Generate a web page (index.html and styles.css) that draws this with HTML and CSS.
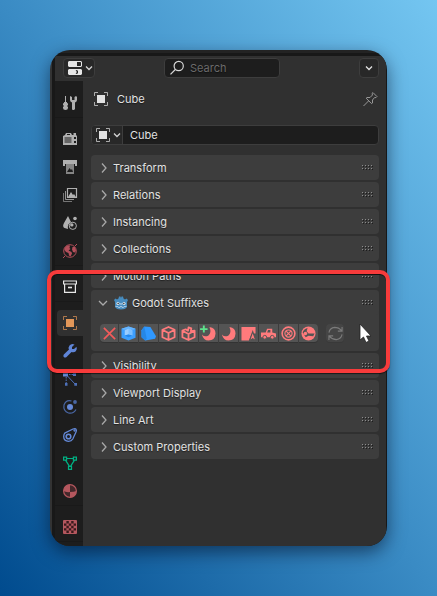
FILE: index.html
```html
<!DOCTYPE html>
<html lang="en">
<head>
<meta charset="utf-8">
<title>Object Properties</title>
<link rel="stylesheet" href="styles.css">
</head>
<body>
<svg class="defs" aria-hidden="true">
  <symbol id="right" viewBox="0 0 8 12"><path d="M2 1.5 6 6 2 10.5" fill="none" stroke="currentColor" stroke-width="1.3"/></symbol>
  <symbol id="down" viewBox="0 0 8 6"><path d="M1 1.5 4 4.5 7 1.5" fill="none" stroke="currentColor" stroke-width="1.3"/></symbol>
  <symbol id="object" viewBox="0 0 14 14"><path d="M.5 4V.5H4M10 .5h3.500V4M13.500 10v3.500H10M4 13.500H.5V10" fill="none" stroke="currentColor" opacity=".7"/><path d="M3 3h8v8H3z" fill="currentColor"/></symbol>
  <symbol id="grip" viewBox="0 0 12 6"><path d="M0 1h1v1H0zM3 1h1v1H3zM6 1h1v1H6zM9 1h1v1H9zM0 4h1v1H0zM3 4h1v1H3zM6 4h1v1H6zM9 4h1v1H9z" fill="#8c8c8c"/><path d="M1 2h1v1H1zM4 2h1v1H4zM7 2h1v1H7zM10 2h1v1h-1zM1 5h1v1H1zM4 5h1v1H4zM7 5h1v1H7zM10 5h1v1h-1z" fill="#1c1c1c"/></symbol>
</svg>
<main class="window">
  <header class="header">
    <div class="editor-type">
      <svg width="14" height="14" viewBox="0 0 14 14"><path d="M1 0h12l1 1v4l-1 1H1L0 5V1zM9 1v4h3.500l.5-.5v-3l-.5-.5zM1 8h12l1 1v4l-1 1H1l-1-1V9zM7.500 9l1 1v2l-1 1H9l1-1v-2L9 9z" fill="#e6e6e6" fill-rule="evenodd"/></svg>
      <svg class="chev" width="8" height="6"><use href="#down"/></svg>
    </div>
    <div class="search">
      <svg width="16" height="16" viewBox="0 0 16 16" fill="none" stroke="#d8d8d8" stroke-width="1.200"><circle cx="9.700" cy="6" r="4.600"/><path d="M6.300 9.500 1.500 14.300"/></svg>
      <span>Search</span>
    </div>
    <div class="options"><svg width="8" height="6"><use href="#down"/></svg></div>
  </header>
  <div class="content">
    <nav class="tabs">
      <div class="group">
        <div class="tab"><svg width="14" height="14" viewBox="0 0 14 14" fill="#b0b0b0"><path d="M2 0h1v6H2zM0 8q0-1 1-1V6h3v1q1 0 1 1v1L4 10l1 1v1q0 2-2.500 2T0 12v-1l1-1-1-1z"/><path d="M7 0l2 1v3h2.500V1L13 0l1 1v3q0 1.500-2 2.500V13l-1 1H9.500L9 13V6.500Q7 5.500 7 4z"/></svg></div>
      </div>
      <div class="group">
        <div class="tab"><svg width="14" height="14" viewBox="0 0 14 14"><path d="M0 4l2-1 1-2h5l1 2h1.500V1H13v2l1 1v9H0z" fill="#b0b0b0"/><path d="M4 2h3v1H4zM1.500 5.500h7v1h-7zM1.500 7.500h7v1h-7zM1.500 9.500h7v1h-7zM11 5h2v2h-2zM11 9h2v2h-2z" fill="#1d1d1d"/></svg></div>
        <div class="tab"><svg width="14" height="14" viewBox="0 0 14 14"><path d="M0 0h14v6h-2V4H2v2H0z" fill="#b0b0b0"/><path d="M3 4h8v10H3z" fill="#858585"/><path d="M4 12l2.500-4 1.500 2 1-1 1 3z" fill="#1d1d1d"/></svg></div>
        <div class="tab"><svg width="14" height="14" viewBox="0 0 14 14" fill="none" stroke="#b0b0b0"><path d="M4.500.5h9v9h-9z" stroke-width="1.200"/><path d="M2.500 3v8.500H11" opacity=".8"/><path d="M.5 5v8.500H9" opacity=".6"/><path d="M5 9l3-5 2 3 1-1 2 3z" fill="#b0b0b0" stroke="none"/></svg></div>
        <div class="tab"><svg width="14" height="14" viewBox="0 0 14 14" fill="#b0b0b0"><path d="M5 0 1 7Q-1 10.500 1.500 12L5 13q-1-5 3-7z"/><circle cx="12" cy="2.500" r="1.800"/><circle cx="9.800" cy="9.800" r="3.600" fill="none" stroke="#b0b0b0"/><circle cx="8.800" cy="8.900" r="1.700"/></svg></div>
        <div class="tab"><svg width="14" height="14" viewBox="0 0 14 14"><circle cx="7" cy="7" r="6.300" fill="none" stroke="#b34f5b"/><path d="M1.500 4 4 1.500 7 1.500 6.500 4 7.500 5 5.500 6.500 8.500 8 9 9.500 7.500 12.500 6 11.500 5.500 9 3 8 1.500 6zM9.500 3l2.500 0 1 3.500-1 2-2-.5L9 5.500z" fill="#b34f5b"/><path d="M0 14l2-2M12 2l2-2" stroke="#b34f5b"/></svg></div>
      </div>
      <div class="group">
        <div class="tab"><svg width="14" height="14" viewBox="0 0 14 14" fill="none" stroke="#e6e6e6" stroke-width="1.200"><path d="M.6 1h12.800v3H.6zM1.600 4v8.400h10.800V4"/><path d="M5 7.500h4" stroke-width="1.600"/></svg></div>
      </div>
      <div class="group">
        <div class="tab active"><svg width="14" height="14"><use href="#object"/></svg></div>
        <div class="tab"><svg width="14" height="14" viewBox="0 0 14 14"><path d="M11.500.5Q8.500-1 6.500 1.500 5 3.500 6 5.500L.8 10.500q-1 1.500 0 2.500t2.500.2L8.500 8q2.500 1 4.300-.8Q14.500 5 13.500 2.700L11 5H9V3z" fill="#5f84d6"/></svg></div>
        <div class="tab"><svg width="14" height="14" viewBox="0 0 14 14" fill="#4e70b8"><path d="M0 0h5v4.500H0z" fill="#6489d8"/><path d="M10 1h3v3h-3zM2 11h2.500v2.800H2zM11.300 11H14v2.800h-2.700z"/><path d="M4 3.500l8 8.500" fill="none" stroke="#4e70b8"/><path d="M3.200 5v6M6 2.500h4" stroke="#4e70b8" stroke-dasharray="1.500 1"/></svg></div>
        <div class="tab"><svg width="14" height="14" viewBox="0 0 14 14"><path d="M8.500 1Q3-.5 1 5q-1 6 4.500 8 5 1 7.500-3.500" fill="none" stroke="#4966a3" stroke-width="1.200"/><circle cx="7" cy="7" r="3" fill="#678ad8"/><circle cx="12" cy="2" r="1.900" fill="#4966a3"/></svg></div>
        <div class="tab"><svg width="14" height="14" viewBox="0 0 14 14" fill="none" stroke="#6489d8" stroke-width="1.300"><path d="M1.700 5.200 10 1q2.500-1 3.200.5.500 1-.2 2.500L9.800 11q-1.400 2.300-4.300 2.400Q.7 13 .7 8.500.8 6.500 1.700 5.200z"/><circle cx="5.500" cy="8.500" r="2.300" stroke-width="1.600"/><circle cx="11.500" cy="2.500" r=".5"/></svg></div>
        <div class="tab"><svg width="14" height="14" viewBox="0 0 14 14" fill="none" stroke="#00b183" stroke-width="1.200"><path d="M.6 1.100h3v3h-3zM10.400 1.100h3v3h-3zM5.500 10.400h3v3h-3zM3.600 2.500h6.800M2.500 4.100l4 6.300M11.500 4.100l-4 6.300"/></svg></div>
        <div class="tab"><svg width="14" height="14" viewBox="0 0 14 14"><circle cx="7" cy="7" r="6.400" fill="#44282b" stroke="#b4575e" stroke-width="1.200"/><path d="M7 .5Q1 .5.5 7 3 8.500 7 8zM7 8q4 0 6.500-1Q13 13 7 13.500z" fill="#b4575e"/></svg></div>
      </div>
      <div class="group">
        <div class="tab"><svg width="14" height="14" viewBox="0 0 14 14"><path d="M.5.500h13v13H.5z" fill="#38191b" stroke="#b4575e"/><path d="M1 1h2.400v2.400H1zM5.800 1h2.400v2.400H5.800zM10.600 1H13v2.400h-2.400zM3.400 3.400h2.400v2.400H3.400zM8.200 3.400h2.400v2.400H8.200zM1 5.800h2.400v2.400H1zM5.800 5.800h2.400v2.400H5.800zM10.600 5.800H13v2.400h-2.400zM3.400 8.200h2.400v2.400H3.400zM8.200 8.200h2.400v2.400H8.200zM1 10.600h2.400V13H1zM5.800 10.600h2.400V13H5.800zM10.600 10.600H13V13h-2.400z" fill="#b4575e"/></svg></div>
      </div>
    </nav>
    <section class="properties">
      <div class="crumb">
        <svg width="14" height="14"><use href="#object"/></svg><span>Cube</span>
        <svg class="pin" width="15" height="15" viewBox="0 0 15 15" fill="none" stroke="#989898"><path d="M9 1.500 10 .6l4 4-1 1h-1.500L9.500 8v3l-1 .6L3.200 6.200 4 5.500h3L9.500 3zM5.500 9 .5 14"/></svg>
      </div>
      <div class="datablock">
        <div class="picker"><svg width="14" height="14"><use href="#object"/></svg><svg class="chev" width="8" height="6"><use href="#down"/></svg></div>
        <span>Cube</span>
      </div>
      <div class="panels">
        <div class="panel"><svg class="arrow"><use href="#right"/></svg><span>Transform</span><svg class="grip"><use href="#grip"/></svg></div>
        <div class="panel"><svg class="arrow"><use href="#right"/></svg><span>Relations</span><svg class="grip"><use href="#grip"/></svg></div>
        <div class="panel"><svg class="arrow"><use href="#right"/></svg><span>Instancing</span><svg class="grip"><use href="#grip"/></svg></div>
        <div class="panel"><svg class="arrow"><use href="#right"/></svg><span>Collections</span><svg class="grip"><use href="#grip"/></svg></div>
        <div class="panel"><svg class="arrow"><use href="#right"/></svg><span>Motion Paths</span><svg class="grip"><use href="#grip"/></svg></div>
        <div class="open-panel">
          <div class="panel">
            <svg class="opened" viewBox="0 0 10 8"><path d="M1 2l4 4 4-4" fill="none" stroke="currentColor" stroke-width="1.300"/></svg>
            <svg width="14" height="14" viewBox="0 0 14 14"><path d="M0 4l1.500-1.500L3 3.500l1.500-1L5 .5h1.500L7 2l.5-1.500H9l.5 2 1.500 1 1.500-1L14 4l-1 2v5q-1.500 2.500-6 2.500T1 11V6z" fill="#478cbf"/><circle cx="4" cy="7.500" r="1.600" fill="#dce9f2"/><circle cx="10" cy="7.500" r="1.600" fill="#dce9f2"/><circle cx="4.200" cy="7.500" r=".8" fill="#414042"/><circle cx="9.800" cy="7.500" r=".8" fill="#414042"/><path d="M1.500 10.500H4l.5 1h1.500v-1h2v1h1.500l.5-1h2.500" fill="none" stroke="#b8d2e6" stroke-width=".8"/><path d="M7 7v1.800" stroke="#dce9f2"/></svg>
            <span>Godot Suffixes</span><svg class="grip"><use href="#grip"/></svg>
          </div>
          <div class="actions">
            <div class="buttons">
              <button><svg viewBox="0 0 16 16" stroke="#f35b5b" stroke-width="1.800"><path d="M2 2l12 12M14 2 2 14"/></svg></button>
              <button><svg viewBox="0 0 16 16"><path d="M8 .5l7.500 2.500v9.500L8 15.500.5 12.500V3z" fill="#3c9fff"/><path d="M8 .5l7.500 2.500L13 4H3L.5 3z" fill="#67b5ff"/><path d="M4 4.500 8 3l4 1.500V10L8 9l-4 1z" fill="#9acdff"/><path d="M8 3l4 1.500V10L8 9z" fill="#7bbfff"/><path d="M4 10l4-1 4 1-4 2z" fill="#2387ec"/></svg></button>
              <button><svg viewBox="0 0 16 16"><path d="M3.500.5 10 1l6 10-1 2.500L4.500 15.500.5 12V4.500z" fill="#2f98ff"/><path d="M3.500.5.5 4.500V12l4 3.500L6 13z" fill="#2687e6"/></svg></button>
              <button><svg viewBox="0 0 16 16" fill="none" stroke="#ff7a7c" stroke-width="1.900" stroke-linejoin="round"><path d="M8 1l6.500 3v8L8 15l-6.500-3V4zM1.500 4 8 7.500 14.500 4M8 7.500V15"/></svg></button>
              <button><svg viewBox="0 0 16 16" fill="none" stroke="#ff7a7c" stroke-width="1.900" stroke-linejoin="round"><path d="M1.500 5 5 3.500 7.500 5 8 1.500l3 1-.5 3 4-.5v7L8 15l-6.500-3zM1.500 5 8 8.500 14.500 5M8 8.500V15"/></svg></button>
              <button><svg viewBox="0 0 16 16"><path d="M9 1q6.500 1 6.500 7-.500 7.500-7.500 7.500-5.500 0-7-6.500 3 3.500 7 1Q11.500 7 9 1z" fill="#ff7a7c"/><path d="M3 -.5v7.500M-1 3.300h8" stroke="#5de38c" stroke-width="2"/></svg></button>
              <button><svg viewBox="0 0 16 16"><path d="M9 1q6.500 1 6.500 7-.500 7.500-7.500 7.500-5.500 0-7-6.500 3 3.500 7 1Q11.500 7 9 1z" fill="#ff7a7c"/></svg></button>
              <button><svg viewBox="0 0 16 16"><path d="M.5 1h15v7h-4L8.500 15.500h-8z" fill="#ff7a7c"/><path d="M9 16l3.500-10L16 16l-3.500-2.500z" fill="#ff7a7c" stroke="#545454" stroke-width="1.200"/></svg></button>
              <button><svg viewBox="0 0 16 16"><path d="M0 7h5l1.500-4H12v4l4 1v4H0z" fill="#ff7a7c"/><path d="M7.500 4.200H10V7H6.500z" fill="#545454"/><circle cx="4" cy="12" r="2" fill="#ff7a7c" stroke="#545454"/><circle cx="12" cy="12" r="2" fill="#ff7a7c" stroke="#545454"/></svg></button>
              <button><svg viewBox="0 0 16 16" fill="none" stroke="#ff7a7c"><circle cx="8" cy="8" r="6.800" stroke-width="1.700"/><circle cx="8" cy="8" r="3.800" stroke-width="1.200"/><path d="M5.500 5.500l5 5M10.500 5.500l-5 5" stroke-width="1.200"/></svg></button>
              <button><svg viewBox="0 0 16 16"><circle cx="8" cy="8" r="7.500" fill="#ff7a7c"/><path d="M1.800 7Q2.500 3 7 2L6 5.500 8 8h6.500L13 11l-5-.5L5 12z" fill="#545454"/><circle cx="4.700" cy="8" r="1.900" fill="#ff7a7c"/></svg></button>
            </div>
            <button class="refresh"><svg viewBox="0 0 16 16" fill="none" stroke="#7b7b7b" stroke-width="1.200"><path d="M1 7Q2 2 7 1.500 11.500 1.500 14.500 5M15 1v4.500h-4.500M15 9q-1 5-6 5.500-4.500 0-7.500-3.500M1 15v-4.500h4.500"/></svg></button>
          </div>
        </div>
        <div class="panel"><svg class="arrow"><use href="#right"/></svg><span>Visibility</span><svg class="grip"><use href="#grip"/></svg></div>
        <div class="panel"><svg class="arrow"><use href="#right"/></svg><span>Viewport Display</span><svg class="grip"><use href="#grip"/></svg></div>
        <div class="panel"><svg class="arrow"><use href="#right"/></svg><span>Line Art</span><svg class="grip"><use href="#grip"/></svg></div>
        <div class="panel"><svg class="arrow"><use href="#right"/></svg><span>Custom Properties</span><svg class="grip"><use href="#grip"/></svg></div>
      </div>
    </section>
  </div>
</main>
<div class="highlight"></div>
<svg class="cursor" width="14" height="22" viewBox="0 0 14 22"><path d="M1 1v16l3.500-3 2.500 5.500 3-1.500-2.500-5H12z" fill="#fff" stroke="#222" stroke-width=".8"/></svg>
</body>
</html>
```
FILE: styles.css
```css
* { box-sizing: border-box; }
body {
  margin: 0;
  width: 437px;
  height: 596px;
  overflow: hidden;
  padding: 50px;
  position: relative;
  background: linear-gradient(to top right, #004b8e 0%, #3a8bc4 50%, #74c6f1 100%);
  font: 11px/16px Inter, sans-serif;
  letter-spacing: .02px;
  color: #e2e2e2;
}
svg { display: block; flex: none; overflow: visible; }
.panel span { padding-top: 1px; }
.defs { position: absolute; width: 0; height: 0; }
.window {
  width: 337px;
  height: 496px;
  border-radius: 20px;
  padding: 6px 1px 0 5px;
  background:
    linear-gradient(#232323, #232323) 0 0 / 100% 3px no-repeat,
    linear-gradient(#333, #333) 0 0 / 2px 100% no-repeat,
    #181818;
  overflow: hidden;
  box-shadow: 0 6px 18px rgba(0, 10, 30, .55);
  display: flex;
  flex-direction: column;
  text-shadow: 0 1px 1px rgba(0, 0, 0, .5);
}
.header {
  height: 25px;
  flex: none;
  display: flex;
  align-items: flex-start;
  padding: 2px 8px 0;
  background: #303030;
}
.editor-type, .search, .options, .datablock {
  height: 20px;
  border: 1px solid #3d3d3d;
  border-radius: 4px;
  display: flex;
  align-items: center;
}
.editor-type { width: 32px; padding-left: 4px; gap: 2px; background: #282828; }
.chev { color: #d4d4d4; }
.editor-type .chev { margin-left: 1px; }
.search { width: 116px; margin-left: 69px; background: #1d1d1d; padding-left: 4px; gap: 5px; color: #6b6b6b; }
.options { width: 20px; margin-left: auto; margin-right: -1px; background: #282828; justify-content: center; }
.content { flex: 1; display: flex; min-height: 0; background: #303030; }
.tabs {
  width: 28px;
  flex: none;
  background: #1d1d1d;
  padding-top: 8px;
  display: flex;
  flex-direction: column;
  gap: 8px;
}
.group { box-shadow: 0 1px #191919; }
.tab { height: 28px; display: flex; align-items: center; justify-content: center; padding-left: 2px; }
.active {
  height: 26px;
  margin: 1px 0 1px 2px;
  padding-left: 0;
  background: #303030;
  border-radius: 4px 0 0 4px;
  color: #e19658;
}
.properties { flex: 1; padding: 10px 7px 0 8px; }
.crumb { height: 16px; display: flex; align-items: center; padding: 0 1px 0 3px; gap: 9px; }
.pin { margin-left: auto; }
.datablock { margin-top: 18px; background: #1d1d1d; gap: 7px; }
.picker {
  width: 31px;
  height: 18px;
  display: flex;
  align-items: center;
  padding-left: 4px;
  gap: 3px;
  background: #282828;
  border-right: 1px solid #3d3d3d;
  border-radius: 3px 0 0 3px;
}
.panels { margin-top: 10px; display: flex; flex-direction: column; gap: 2px; }
.panel, .open-panel { background: #3d3d3d; border-radius: 4px; }
.panel { height: 25px; display: flex; align-items: center; padding: 0 5px 0 9px; }
.arrow { width: 8px; height: 12px; margin-right: 5px; color: #a8a8a8; }
.grip { width: 12px; height: 6px; margin: -2px 0 0 auto; }
.opened { width: 10px; height: 8px; margin: 0 6px 0 -2px; color: #aaa; }
.open-panel { height: 61px; }
.open-panel span { margin-left: 4px; }
.actions { display: flex; gap: 8px; padding: 9px 0 0 9px; }
.buttons { display: flex; gap: 1px; }
button {
  appearance: none;
  border: 0;
  padding: 0;
  width: 19px;
  height: 18px;
  background: #545454;
  box-shadow: 0 1px #333;
  display: grid;
  place-items: center;
}
button svg { width: 15px; height: 15px; }
.buttons button:first-child { width: 18px; border-radius: 4px 0 0 4px; }
.buttons button:last-child { border-radius: 0 4px 4px 0; }
.refresh { width: 18px; border-radius: 4px; background: #454545; box-shadow: 0 1px #393939; }
.highlight {
  position: absolute;
  left: 47px;
  top: 270px;
  width: 343px;
  height: 103px;
  border: 4px solid #f73b3b;
  border-radius: 10px;
  box-shadow: 0 1px 1px rgba(0, 0, 0, .6), inset 0 1px #111;
}
.cursor { position: absolute; left: 359px; top: 323px; }
```
